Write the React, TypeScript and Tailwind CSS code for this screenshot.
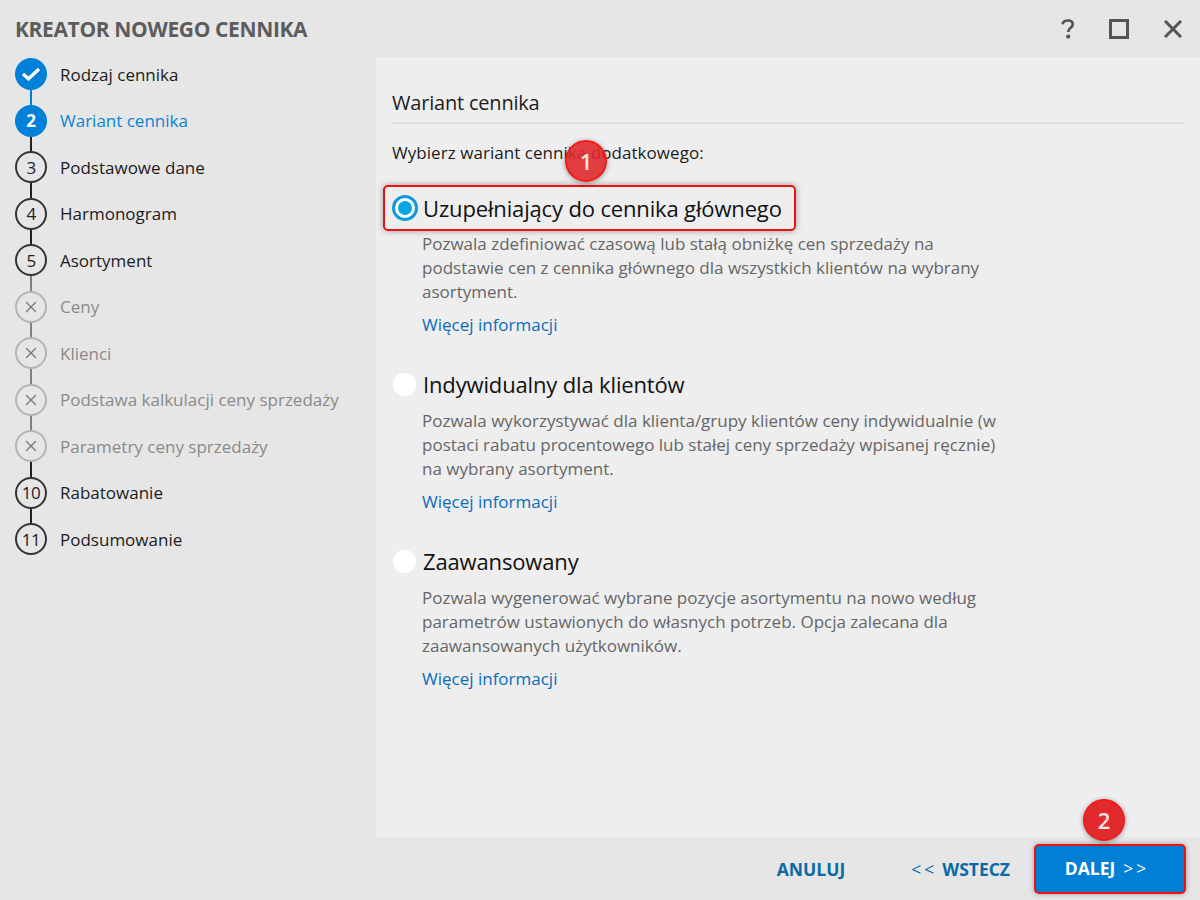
import { X } from 'lucide-react';

type StepState = 'done' | 'current' | 'todo' | 'off';

const steps: { label: string; state: StepState; num?: number }[] = [
  { label: 'Rodzaj cennika', state: 'done' },
  { label: 'Wariant cennika', state: 'current', num: 2 },
  { label: 'Podstawowe dane', state: 'todo', num: 3 },
  { label: 'Harmonogram', state: 'todo', num: 4 },
  { label: 'Asortyment', state: 'todo', num: 5 },
  { label: 'Ceny', state: 'off' },
  { label: 'Klienci', state: 'off' },
  { label: 'Podstawa kalkulacji ceny sprzedaży', state: 'off' },
  { label: 'Parametry ceny sprzedaży', state: 'off' },
  { label: 'Rabatowanie', state: 'todo', num: 10 },
  { label: 'Podsumowanie', state: 'todo', num: 11 },
];

const options = [
  {
    label: 'Indywidualny dla klientów',
    lines: [
      'Pozwala wykorzystywać dla klienta/grupy klientów ceny indywidualnie (w',
      'postaci rabatu procentowego lub stałej ceny sprzedaży wpisanej ręcznie)',
      'na wybrany asortyment.',
    ],
  },
  {
    label: 'Zaawansowany',
    lines: [
      'Pozwala wygenerować wybrane pozycje asortymentu na nowo według',
      'parametrów ustawionych do własnych potrzeb. Opcja zalecana dla',
      'zaawansowanych użytkowników.',
    ],
  },
];

function StepCircle({ state, num }: { state: StepState; num?: number }) {
  if (state === 'done') {
    return (
      <div className="w-8 h-8 shrink-0 rounded-full bg-[#0080d8] flex items-center justify-center">
        <svg width="20" height="14" viewBox="0 0 20 14" fill="none">
          <path d="M2 7l5.5 4.8L18 2" stroke="white" strokeWidth="3.4" />
        </svg>
      </div>
    );
  }
  if (state === 'current') {
    return (
      <div className="w-8 h-8 shrink-0 rounded-full bg-[#0080d8] flex items-center justify-center text-white text-[17px] font-bold">
        {num}
      </div>
    );
  }
  if (state === 'off') {
    return (
      <div className="w-8 h-8 shrink-0 rounded-full border-2 border-[#b4b4b4] flex items-center justify-center text-[#777]">
        <X className="w-[18px] h-[18px]" strokeWidth={1.7} />
      </div>
    );
  }
  return (
    <div className="w-8 h-8 shrink-0 rounded-full border-2 border-[#333] flex items-center justify-center text-[#222] text-[17px] tracking-[-0.5px]">
      {num}
    </div>
  );
}

function Line({ color }: { color: string }) {
  return <div className={`w-0.5 flex-1 ${color}`} />;
}

function InfoLink() {
  return <div className="mt-[9px] h-6 leading-6 ml-[30px] text-[17px] text-[#0a6cb8]">Więcej informacji</div>;
}

export default function App() {
  return (
    <div className="w-[1200px] h-[900px] flex flex-col bg-[#e6e6e6] overflow-hidden font-['Open_Sans','Noto_Sans',sans-serif]">
      <header className="h-[57px] shrink-0 flex items-center justify-between pl-[15px] pr-[18px]">
        <h1 className="text-[21px] font-bold text-[#5c5c5c] tracking-[-0.36px] mt-[2px]">KREATOR NOWEGO CENNIKA</h1>
        <div className="flex items-center text-[#555]">
          <svg width="14" height="20" viewBox="0 0 14 20" className="mr-[34px]" fill="none">
            <path d="M1.6 5.2C2 2.8 4 1.5 6.8 1.5c3 0 5 1.5 5 3.8 0 3.5-4.6 3.4-4.6 7.6" stroke="currentColor" strokeWidth="2.7" />
            <circle cx="7.2" cy="17.6" r="2.1" fill="currentColor" />
          </svg>
          <div className="w-5 h-5 border-[3px] border-[#555] mr-[35px]" />
          <svg width="18" height="18" viewBox="0 0 18 18" fill="none">
            <path d="M1 1l16 16M17 1L1 17" stroke="currentColor" strokeWidth="3" />
          </svg>
        </div>
      </header>

      <div className="flex-1 flex min-h-0">
        <aside className="w-[376px] shrink-0 pl-[15px] -mt-[6px]">
          {steps.map((s, i) => {
            const prev = steps[i - 1];
            const next = steps[i + 1];
            const dim = s.state === 'off';
            const topColor = s.state === 'done' ? 'bg-transparent' : prev?.state === 'done' ? 'bg-[#0080d8]' : dim ? 'bg-[#808080]' : 'bg-[#222]';
            const botColor = !next ? 'bg-transparent' : s.state === 'done' ? 'bg-[#0080d8]' : next.state === 'off' ? 'bg-[#808080]' : 'bg-[#222]';
            return (
              <div key={s.label} className="flex items-stretch h-[46.5px]">
                <div className="w-8 flex flex-col items-center">
                  <Line color={topColor} />
                  <StepCircle state={s.state} num={s.num} />
                  <Line color={botColor} />
                </div>
                <div
                  className={`ml-[13px] self-center text-[17px] ${
                    s.state === 'current' ? 'text-[#0a84d6]' : dim ? 'text-[#8a8a8a]' : 'text-[#1c1c1c]'
                  }`}
                >
                  {s.label}
                </div>
              </div>
            );
          })}
        </aside>

        <main className="relative flex-1 bg-[#eeeeee] pl-4 pr-[15px]">
          <h2 className="pt-[31px] h-[67px] text-[20px] tracking-[-0.2px] leading-[30px] text-[#1c1c1c] border-b-2 border-[#dcdcdc]">Wariant cennika</h2>
          <p className="mt-[17px] text-[17px] tracking-[0.05px] leading-6 text-[#1c1c1c]">Wybierz wariant cennika dodatkowego:</p>

          <div className="absolute left-[189px] top-[83px] w-[42px] h-[42px] rounded-full bg-[#e02a2e]/90 border-2 border-[#f01a1a] shadow-[0_1px_5px_rgba(0,0,0,0.4)] flex items-center justify-center text-[#fbe4e4] text-[22px] font-semibold">1</div>

          <div className="mt-[20px] -ml-[9px] w-[413px] h-[46px] rounded-[5px] border-2 border-[#ee1111] shadow-[0_0_6px_rgba(0,0,0,0.35)] flex items-center pl-[7px]">
            <div className="w-[26px] h-[26px] rounded-full bg-white border-[3px] border-[#1398dc] flex items-center justify-center">
              <div className="w-[14px] h-[14px] rounded-full bg-[#0ba5e6]" />
            </div>
            <span className="ml-[5px] text-[22px] tracking-[-0.15px] text-[#111] leading-none">Uzupełniający do cennika głównego</span>
          </div>
          <div className="mt-[1px] ml-[30px] text-[17px] leading-6 text-[#666]">
            Pozwala zdefiniować czasową lub stałą obniżkę cen sprzedaży na<br />
            podstawie cen z cennika głównego dla wszystkich klientów na wybrany<br />
            asortyment.
          </div>
          <InfoLink />

          {options.map((o) => (
            <div key={o.label} className="mt-[34px]">
              <div className="flex items-center h-[26px]">
                <div className="w-[23px] h-[23px] rounded-full bg-white ml-[1px]" />
                <span className="ml-[7px] text-[22px] tracking-[-0.15px] text-[#111] leading-none">{o.label}</span>
              </div>
              <div className="mt-[12px] ml-[30px] text-[17px] leading-6 text-[#666]">
                {o.lines.map((l) => (
                  <div key={l}>{l}</div>
                ))}
              </div>
              <InfoLink />
            </div>
          ))}

          <div className="absolute left-[707px] top-[742px] w-[42px] h-[42px] rounded-full bg-[#e02a2e] border-2 border-[#f01a1a] shadow-[0_1px_5px_rgba(0,0,0,0.4)] flex items-center justify-center text-[#fbe4e4] text-[22px] font-semibold">2</div>
        </main>
      </div>

      <footer className="h-[63px] shrink-0 flex items-center justify-end pr-[14px]">
        <button className="mr-[66px] mt-[1px] text-[17.5px] font-bold text-[#0a6aa8]">ANULUJ</button>
        <button className="mr-[24px] mt-[1px] text-[17.5px] font-bold text-[#0a6aa8]">
          <span className="font-normal tracking-[3px] mr-[5px]">&lt;&lt;</span>WSTECZ
        </button>
        <button className="w-[152px] h-[50px] pr-[6px] rounded-[5px] border-2 border-[#ee1111] bg-[#0080d4] shadow-[0_0_5px_rgba(0,0,0,0.35)] text-[17.5px] font-bold text-white">
          DALEJ<span className="font-normal tracking-[3px] ml-[8px]">&gt;&gt;</span>
        </button>
      </footer>
    </div>
  );
}
